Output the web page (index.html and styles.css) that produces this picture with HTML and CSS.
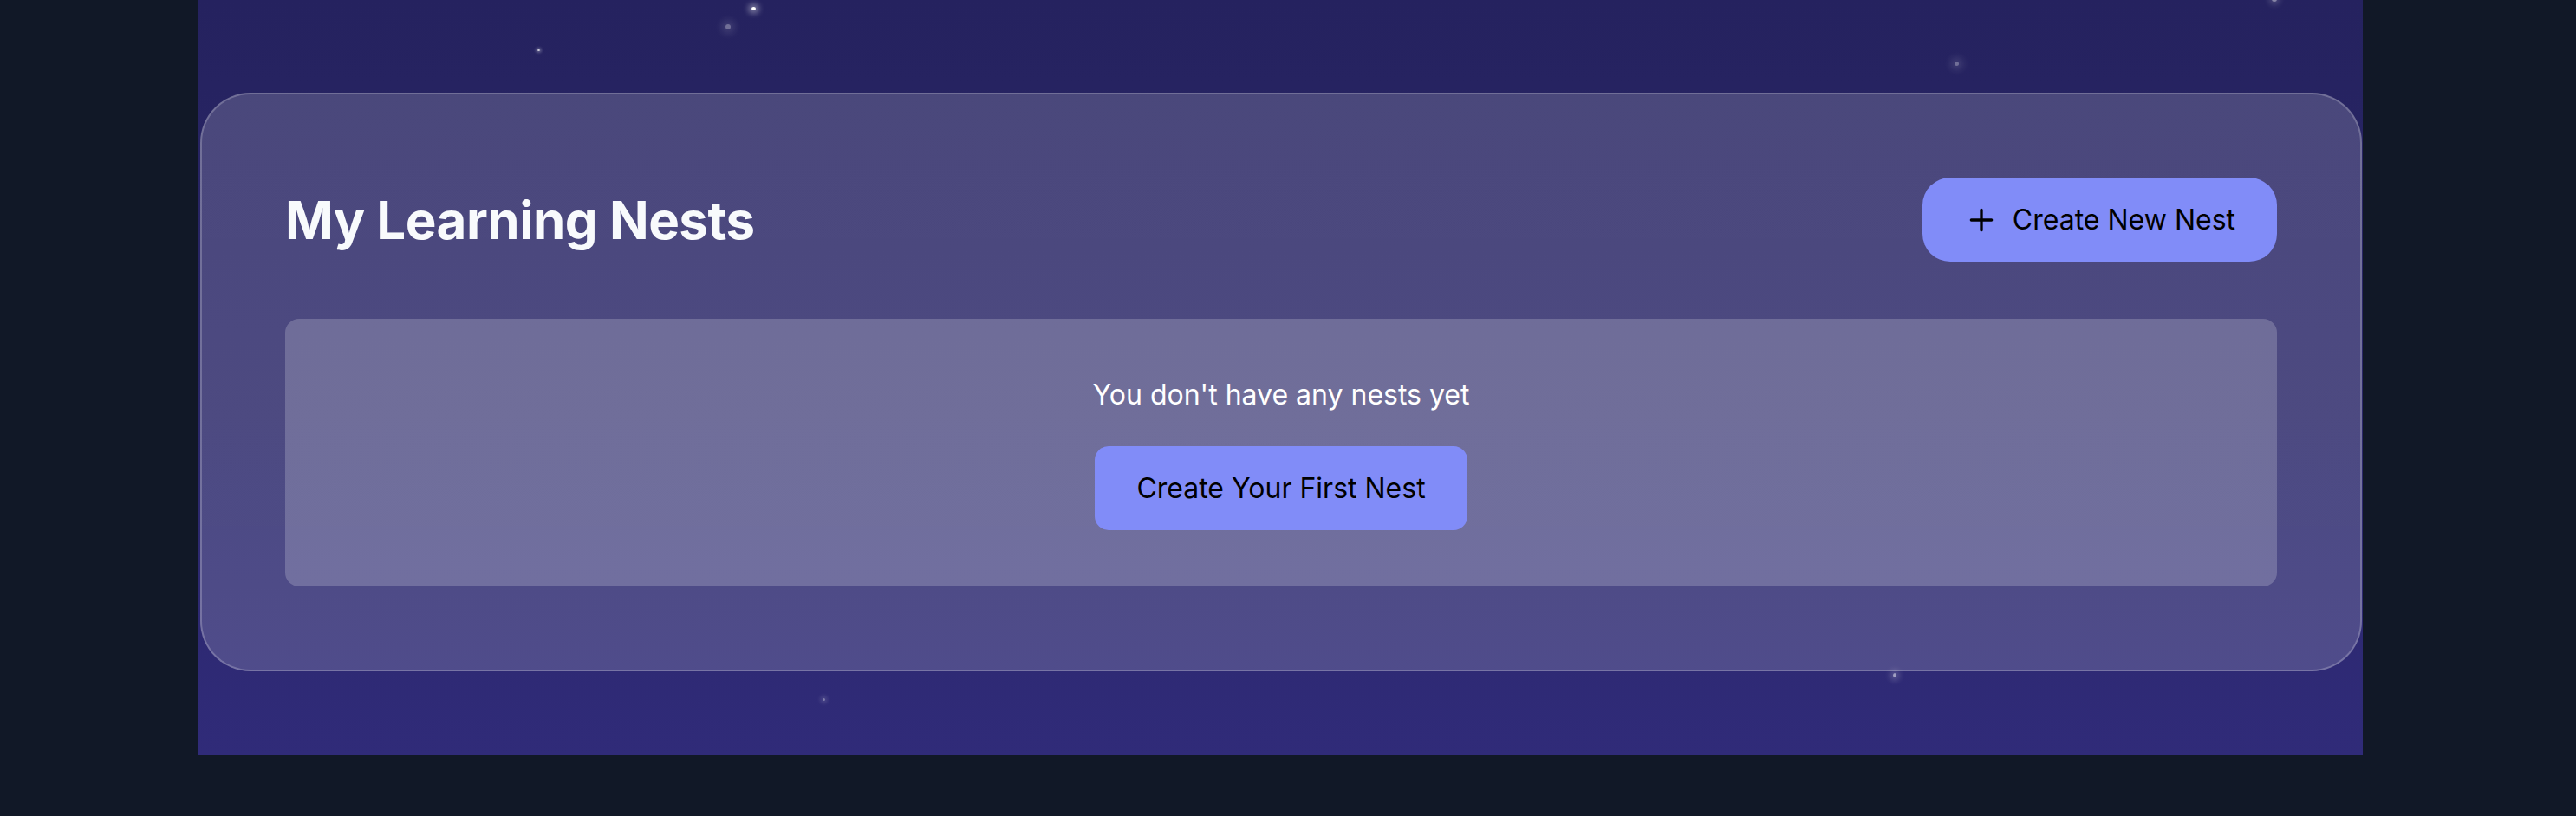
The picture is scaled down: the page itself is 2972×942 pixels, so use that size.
FILE: index.html
```html
<!DOCTYPE html>
<html lang="en">
<head>
<meta charset="utf-8">
<title>My Learning Nests</title>
<link rel="stylesheet" href="styles.css">
</head>
<body>
<div class="page">
  <main class="panel">
    <span class="star star-a"></span>
    <span class="star star-b"></span>
    <span class="star star-c"></span>
    <span class="star star-d"></span>
    <span class="star star-e"></span>
    <span class="star star-f"></span>
    <span class="star star-g"></span>
    <section class="card">
      <header class="card-header">
        <h1 class="title">My Learning Nests</h1>
        <button class="btn btn-new" type="button">
          <svg class="icon" viewBox="0 0 24 24" fill="none" stroke="currentColor" stroke-width="2" stroke-linecap="round" stroke-linejoin="round"><path d="M5 12h14"/><path d="M12 5v14"/></svg>
          <span>Create New Nest</span>
        </button>
      </header>
      <div class="empty">
        <p class="empty-text">You don't have any nests yet</p>
        <button class="btn btn-first" type="button">Create Your First Nest</button>
      </div>
    </section>
  </main>
</div>
</body>
</html>
```

FILE: styles.css
```css
* { box-sizing: border-box; }
html, body { margin: 0; padding: 0; }
body {
  background: #111827;
  font-family: Inter, "Noto Sans", "Liberation Sans", sans-serif;
  min-height: 942px;
}
.page {
  padding-left: 229px;
}
.panel {
  position: relative;
  width: 2497px;
  padding: 107px 1px 97px 2px;
  background: linear-gradient(180deg, #25225f 0%, #2a2769 55%, #302b79 100%);
  overflow: hidden;
}
.star {
  position: absolute;
  border-radius: 50%;
  background: #fff;
}
.star-a { left: 638px; top: 8px; width: 5px; height: 4px; box-shadow: 0 0 6px 4px rgba(255,255,255,0.35); }
.star-b { left: 608px; top: 28px; width: 6px; height: 6px; background: rgba(255,255,255,0.35); box-shadow: 0 0 8px 5px rgba(255,255,255,0.12); }
.star-c { left: 391px; top: 57px; width: 3px; height: 2px; background: rgba(255,255,255,0.8); box-shadow: 0 0 3px 2px rgba(255,255,255,0.25); }
.star-d { left: 2026px; top: 71px; width: 5px; height: 5px; background: rgba(255,255,255,0.35); box-shadow: 0 0 8px 5px rgba(255,255,255,0.12); }
.star-e { left: 1955px; top: 777px; width: 4px; height: 5px; background: rgba(255,255,255,0.55); box-shadow: 0 0 6px 4px rgba(255,255,255,0.18); }
.star-f { left: 720px; top: 806px; width: 3px; height: 3px; background: rgba(255,255,255,0.4); box-shadow: 0 0 4px 3px rgba(255,255,255,0.12); }
.star-g { left: 2392px; top: -3px; width: 6px; height: 5px; background: rgba(255,255,255,0.45); box-shadow: 0 0 6px 4px rgba(255,255,255,0.15); }
.card {
  position: relative;
  border: 2px solid rgba(255,255,255,0.22);
  border-radius: 58px;
  background: linear-gradient(180deg, rgba(255,255,255,0.17) 0%, rgba(255,255,255,0.16) 100%);
  padding: 96px 96px 96px 96px;
}
.card-header {
  display: flex;
  align-items: center;
  justify-content: space-between;
  margin-bottom: 66px;
}
.title {
  margin: 0;
  font-size: 60px;
  line-height: 72px;
  font-weight: 700;
  color: #f8fafc;
  letter-spacing: -0.5px;
}
.btn {
  border: 0;
  background: #818cf8;
  color: #000;
  font-family: inherit;
  font-size: 32px;
  line-height: 48px;
  font-weight: 400;
  cursor: pointer;
}
.btn-new {
  display: flex;
  align-items: center;
  gap: 16px;
  height: 97px;
  padding: 0 48px;
  border-radius: 32px;
}
.icon {
  width: 40px;
  height: 40px;
  display: block;
}
.empty {
  display: flex;
  flex-direction: column;
  align-items: center;
  background: rgba(255,255,255,0.2);
  border-radius: 16px;
  padding: 64px 0 65px;
}
.empty-text {
  margin: 0 0 35px;
  color: #fff;
  font-size: 32px;
  line-height: 48px;
}
.btn-first {
  height: 97px;
  padding: 0 48px;
  border-radius: 16px;
}
```
